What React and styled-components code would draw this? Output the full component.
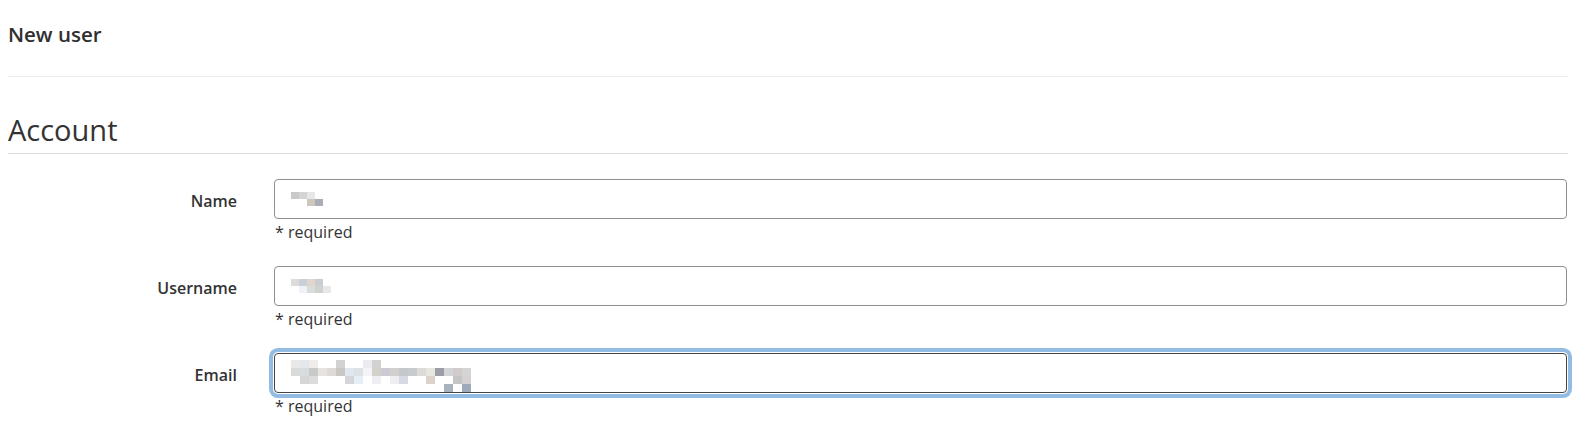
import React from "react";
import styled, { createGlobalStyle } from "styled-components";

const GlobalStyle = createGlobalStyle`
  body {
    margin: 0;
    background: #fff;
    font-family: "Segoe UI", "Open Sans", "Liberation Sans", sans-serif;
    color: #333;
  }
`;

const MOSAICS = {
  name: [
    ["#c9c9c9", "#d4d4d4", "#e6e6e6", "#fff", "#fff"],
    ["#fff", "#fff", "#cfc6bb", "#a9adb4", "#fff"],
  ],
  username: [
    ["#dcdcdc", "#c8d0da", "#e0d6cc", "#c9ced3", "#fff"],
    ["#fff", "#eef2f6", "#d9dcd8", "#cfd3d0", "#e8e8e8"],
  ],
  email: [
    ["#e8e8e8", "#e4e8ea", "#efece9", "#fff", "#fff", "#d2d2d2", "#fff", "#fff", "#ececf0", "#d2d2d2", "#fff", "#fff", "#fff", "#fff", "#fff", "#fff", "#fff", "#fff", "#fff", "#fff", "#fff"],
    ["#d9dada", "#d7dcdf", "#c9c9c9", "#e6e3e0", "#dedad6", "#c8c7c4", "#e0e8ef", "#dfe2e4", "#f4f4f6", "#d4d1cd", "#cdcad4", "#d2cfcc", "#c3c8cc", "#c7cbcd", "#dedad7", "#e7e7e2", "#9c9da6", "#d2d4d6", "#cfcccb", "#d5d5d5", "#fff"],
    ["#fff", "#d6d6d6", "#dcdcdc", "#fff", "#fff", "#fff", "#d4d6dc", "#e6eef6", "#fff", "#f0eef2", "#fff", "#efedf2", "#d7dae4", "#fff", "#fff", "#dcd2cc", "#fff", "#fff", "#c5c5c5", "#d5d1d0", "#fff"],
    ["#fff", "#fff", "#fff", "#fff", "#fff", "#fff", "#fff", "#fff", "#fff", "#fff", "#fff", "#fff", "#fff", "#fff", "#fff", "#fff", "#fff", "#a8b2bf", "#fff", "#9eaabc", "#fff"],
  ],
};

const FIELDS = [
  { id: "name", label: "Name", cell: [8, 7] },
  { id: "username", label: "Username", cell: [8, 7] },
  { id: "email", label: "Email", cell: [9, 8], focused: true },
];

const Mosaic = ({ rows, cell }) => (
  <MosaicGrid $cols={rows[0].length} $w={cell[0]} $h={cell[1]}>
    {rows.flat().map((c, i) => (
      <Cell key={i} $color={c} />
    ))}
  </MosaicGrid>
);

const App = () => (
  <>
    <GlobalStyle />
    <Page>
      <PageHeader>
        <Title>New user</Title>
      </PageHeader>
      <Fieldset>
        <Legend>Account</Legend>
        {FIELDS.map((f) => (
          <Row key={f.id}>
            <Label htmlFor={f.id}>{f.label}</Label>
            <Control>
              <Field id={f.id} $focused={f.focused}>
                <Mosaic rows={MOSAICS[f.id]} cell={f.cell} />
              </Field>
              <Hint>* required</Hint>
            </Control>
          </Row>
        ))}
      </Fieldset>
    </Page>
  </>
);

const Page = styled.div`
  width: 1560px;
  margin-left: 8px;
`;

const PageHeader = styled.div`
  height: 77px;
  border-bottom: 1px solid #ececec;
  box-sizing: border-box;
  padding-top: 21px;
`;

const Title = styled.h1`
  margin: 0;
  font-size: 20.5px;
  font-weight: 600;
  line-height: 26px;
  color: #2f2f2f;
`;

const Fieldset = styled.div`
  padding-top: 33px;
`;

const Legend = styled.div`
  font-size: 29px;
  font-weight: 400;
  line-height: 40px;
  color: #333;
  border-bottom: 1px solid #dcdcdc;
  padding-bottom: 3px;
  margin-bottom: 25px;
`;

const Row = styled.div`
  display: grid;
  grid-template-columns: 229px 1fr;
  column-gap: 37px;
  height: 87px;
  align-items: start;
`;

const Label = styled.label`
  text-align: right;
  font-size: 16px;
  font-weight: 600;
  line-height: 40px;
  padding-top: 2px;
  color: #333;
`;

const Control = styled.div`
  display: flex;
  flex-direction: column;
`;

const Field = styled.div`
  height: 40px;
  box-sizing: border-box;
  border: 1px solid ${(p) => (p.$focused ? "#444" : "#8f8f8f")};
  border-radius: 4px;
  padding: 0 16px;
  display: flex;
  align-items: center;
  background: #fff;
  box-shadow: ${(p) => (p.$focused ? "0 0 0 1px #fff, 0 0 0 5px #93bce4" : "none")};
  width: 1293px;
`;

const MosaicGrid = styled.div`
  display: grid;
  grid-template-columns: repeat(${(p) => p.$cols}, ${(p) => p.$w}px);
  grid-auto-rows: ${(p) => p.$h}px;
  margin-top: ${(p) => (p.$h > 7 ? 6 : 0)}px;
`;

const Cell = styled.div`
  background: ${(p) => p.$color};
`;

const Hint = styled.div`
  font-size: 16px;
  line-height: 20px;
  margin-top: 3px;
  padding-left: 1px;
  color: #333;
`;

export default App;
